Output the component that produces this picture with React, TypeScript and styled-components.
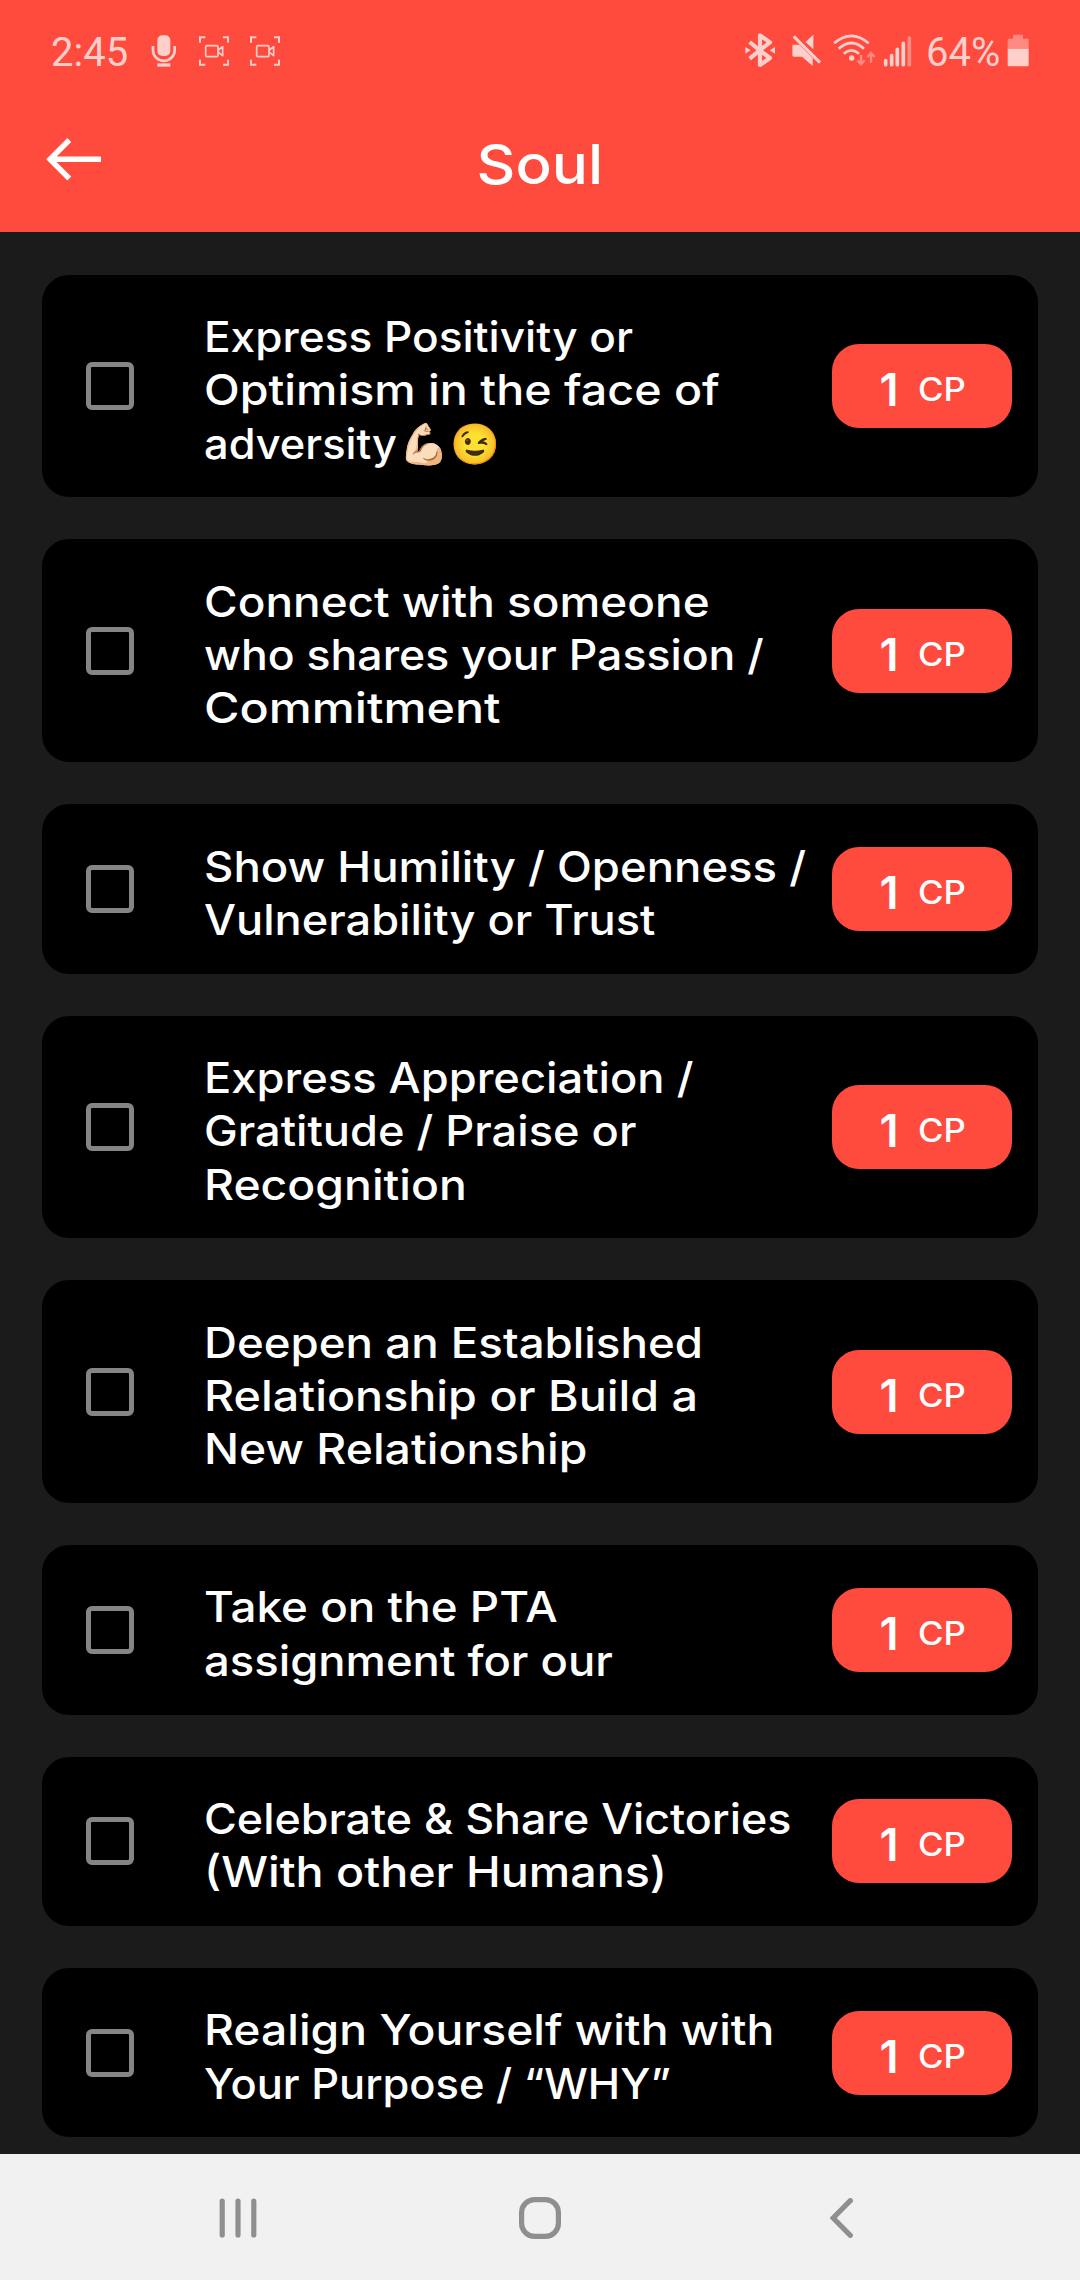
import React from "react";
import styled, { createGlobalStyle } from "styled-components";

const RED = "#ff4b3e";
const STATUS = "#ffcfcc";
const STATUS_DIM = "#ff8a82";

const GlobalStyle = createGlobalStyle`
  * { box-sizing: border-box; }
  body {
    margin: 0;
    background: #1b1b1b;
    font-family: Inter, "Noto Sans", sans-serif;
  }
`;

const Screen = styled.div`
  display: flex;
  flex-direction: column;
  width: 1080px;
  height: 2280px;
  overflow: hidden;
  background: #1b1b1b;
`;

const Header = styled.header`
  flex: none;
  height: 232.4px;
  background: ${RED};
`;

const StatusBar = styled.div`
  display: flex;
  align-items: center;
  justify-content: space-between;
  height: 101.67px;
  padding: 0 50px 0 51px;
`;

const StatusGroup = styled.div`
  display: flex;
  align-items: center;
`;

const StatusText = styled.span<{ $width: number; $before?: number }>`
  width: ${(p) => p.$width}px;
  margin-left: ${(p) => p.$before ?? 0}px;
  color: ${STATUS};
  font: 400 40px/48px Roboto, sans-serif;
  white-space: nowrap;
  padding-top: 4px;
`;

const StatusIcon = styled.svg<{ $before?: number }>`
  display: block;
  flex: none;
  height: 35px;
  margin-left: ${(p) => p.$before ?? 0}px;
`;

const TitleBar = styled.div`
  display: grid;
  grid-template-columns: 1fr auto 1fr;
  align-items: start;
  padding: 32px 46px 0;
`;

const BackButton = styled.button`
  width: 56px;
  height: 50px;
  margin-top: 1px;
  padding: 0;
  border: 0;
  background: none;
  svg { display: block; width: 56px; height: 50px; }
`;

const Title = styled.h1`
  margin: 0;
  color: #fff;
  font-size: 55px;
  font-weight: 500;
  line-height: 60px;
  transform: scaleX(1.094);
`;

const List = styled.main`
  display: flex;
  flex: 1;
  flex-direction: column;
  gap: 42px;
  min-height: 0;
  padding: 42.2px 42px 0;
  overflow: hidden;
`;

const Card = styled.section`
  display: grid;
  flex: none;
  grid-template-columns: 48px 1fr 180px;
  align-items: center;
  padding: 0 26px 0 44.4px;
  border-radius: 27px;
  background: #000;
`;

const Checkbox = styled.span`
  width: 48px;
  height: 48px;
  border: 5px solid #858585;
  border-radius: 6px;
`;

const Label = styled.div`
  padding: 35.4px 0 27.4px 69.4px;
  color: #fff;
  font-size: 42px;
  font-weight: 500;
`;

const Line = styled.div`
  display: flex;
  height: 53.33px;
  line-height: 53.33px;
  white-space: nowrap;
`;

const Words = styled.span<{ $stretch: number }>`
  transform: scaleX(${(p) => p.$stretch});
  transform-origin: left center;
`;

const Emoji = styled.span`
  margin-left: 8px;
  font-size: 40px;
  letter-spacing: 1.5px;
`;

const Pill = styled.div`
  display: flex;
  align-items: baseline;
  height: 84px;
  padding: 19px 0 0 47.5px;
  border-radius: 27px;
  background: ${RED};
  color: #fff;
`;

const Points = styled.span`
  width: 38px;
  font-size: 45px;
  font-weight: 600;
  line-height: 54px;
`;

const Unit = styled.span`
  font-size: 32px;
  font-weight: 500;
  line-height: 40px;
  transform: translateY(-5.5px) scaleX(1.087);
  transform-origin: left center;
`;

const NavBar = styled.nav`
  display: grid;
  flex: none;
  grid-template-columns: repeat(3, 1fr);
  place-items: center;
  height: 126px;
  padding: 2px 87.5px 0;
  background: #f1f1f1;
  svg { display: block; fill: none; stroke: #8f8f8f; stroke-width: 5.2; stroke-linecap: round; }
`;

const ScreenRecord = ({ before }: { before: number }) => (
  <StatusIcon $before={before} width="30" viewBox="597 100 90 105" fill="none" stroke={STATUS}>
    <path strokeWidth="6" d="M600 129V113H616M669 113H684V129M684 180V195H669M616 195H600V180" />
    <rect x="617" y="138" width="37" height="33" rx="4" strokeWidth="5" />
    <path strokeWidth="5" strokeLinejoin="round" d="M655 151L668 141V168L655 158Z" />
  </StatusIcon>
);

interface Task {
  lines: [string, number][];
  emoji?: string;
}

const tasks: Task[] = [
  { lines: [["Express Positivity or", 1.051], ["Optimism in the face of", 1.109], ["adversity", 1.033]], emoji: "💪🏻😉" },
  { lines: [["Connect with someone", 1.093], ["who shares your Passion /", 1.061], ["Commitment", 1.153]] },
  { lines: [["Show Humility / Openness /", 1.083], ["Vulnerability or Trust", 1.075]] },
  { lines: [["Express Appreciation /", 1.078], ["Gratitude / Praise or", 1.076], ["Recognition", 1.103]] },
  { lines: [["Deepen an Established", 1.087], ["Relationship or Build a", 1.111], ["New Relationship", 1.1036]] },
  { lines: [["Take on the PTA", 1.09], ["assignment for our", 1.081]] },
  { lines: [["Celebrate & Share Victories", 1.066], ["(With other Humans)", 1.11]] },
  { lines: [["Realign Yourself with with", 1.1015], ["Your Purpose / “WHY”", 1.034]] },
];

const TaskCard = ({ lines, emoji }: Task) => (
  <Card>
    <Checkbox role="checkbox" aria-checked={false} />
    <Label>
      {lines.map(([text, stretch], i) => (
        <Line key={text}>
          <Words $stretch={stretch}>{text}</Words>
          {emoji && i === lines.length - 1 && <Emoji>{emoji}</Emoji>}
        </Line>
      ))}
    </Label>
    <Pill>
      <Points>1</Points>
      <Unit>CP</Unit>
    </Pill>
  </Card>
);

export default function App() {
  return (
    <Screen>
      <GlobalStyle />
      <Header>
        <StatusBar>
          <StatusGroup>
            <StatusText $width={99}>2:45</StatusText>
            <StatusIcon width="28" viewBox="450 100 84 105">
              <rect x="472" y="107" width="39" height="62" rx="15" fill={STATUS} />
              <path d="M459 139V152A32 31 0 0 0 524 152V139" fill="none" stroke={STATUS} strokeWidth="8" />
              <path d="M472 191H511V201H472Z" fill={STATUS} />
            </StatusIcon>
            <ScreenRecord before={21} />
            <ScreenRecord before={20.67} />
          </StatusGroup>
          <StatusGroup>
            <StatusIcon width="31" viewBox="75 100 93 105" fill={STATUS}>
              <path
                d="M89 127L119 152L89 177M119 152L150 128L120 107V196L150 175L119 152"
                fill="none"
                stroke={STATUS}
                strokeWidth="12.5"
                strokeLinejoin="round"
              />
              <path d="M76 142L92 152L76 162ZM165 142L149 152L165 162Z" />
            </StatusIcon>
            <StatusIcon $before={16.3} width="29.4" viewBox="217 100 88 105" fill={STATUS}>
              <path d="M218 135H239L279 175V199L247 171H222Q218 171 218 167ZM257 127L281 105V149Z" />
              <path d="M222 110L301 189" stroke={STATUS} strokeWidth="9.5" />
              <path d="M229 104L307 183" stroke={RED} strokeWidth="4" />
            </StatusIcon>
            <StatusIcon $before={11.6} width="43.4" viewBox="340 100 130 105" fill="none" stroke={STATUS}>
              <path strokeWidth="8" d="M343 131Q395 86 447 131M357 147Q395 113 433 147M372 162Q395 142 418 162" />
              <circle cx="396" cy="175" r="8" fill={STATUS} stroke="none" />
              <path
                strokeWidth="7"
                stroke={STATUS_DIM}
                d="M424 165V195M413 182L424 194L435 182M454 189V159M443 172L454 160L465 172"
              />
            </StatusIcon>
            <StatusIcon $before={6.6} width="29" viewBox="490 100 87 105" strokeWidth="11" strokeLinecap="round" stroke={STATUS}>
              <path d="M498 183V195M516 168V195M533 149V195M551 131V195" />
              <path d="M569 115V195" stroke={STATUS_DIM} />
            </StatusIcon>
            <StatusText $width={80.3} $before={13.7}>64%</StatusText>
            <StatusIcon $before={1} width="22.7" viewBox="862 100 68 105">
              <path d="M864 147V120Q864 117 867 117H880V108Q880 105 883 105H907Q910 105 910 108V117H924Q927 117 927 120V147Z" fill={STATUS_DIM} />
              <path d="M864 147H927V196Q927 200 923 200H868Q864 200 864 196Z" fill={STATUS} />
            </StatusIcon>
          </StatusGroup>
        </StatusBar>
        <TitleBar>
          <BackButton aria-label="Back">
            <svg viewBox="0 0 56 50" fill="none" stroke="#fff" strokeWidth="5.4">
              <path d="M23.3 5L4 24.3L23.3 43.5M4 24.3H55" />
            </svg>
          </BackButton>
          <Title>Soul</Title>
        </TitleBar>
      </Header>
      <List>
        {tasks.map((task) => (
          <TaskCard key={task.lines[0][0]} {...task} />
        ))}
      </List>
      <NavBar>
        <svg width="38" height="40" viewBox="0 0 38 40">
          <path d="M3.2 3V37M19 3V37M34.8 3V37" />
        </svg>
        <svg width="42" height="42" viewBox="0 0 42 42">
          <rect x="2.6" y="2.6" width="36.8" height="36.8" rx="13" />
        </svg>
        <svg width="23" height="40" viewBox="0 0 23 40">
          <path d="M20.3 2.7L3.2 20L20.3 37.3" />
        </svg>
      </NavBar>
    </Screen>
  );
}
